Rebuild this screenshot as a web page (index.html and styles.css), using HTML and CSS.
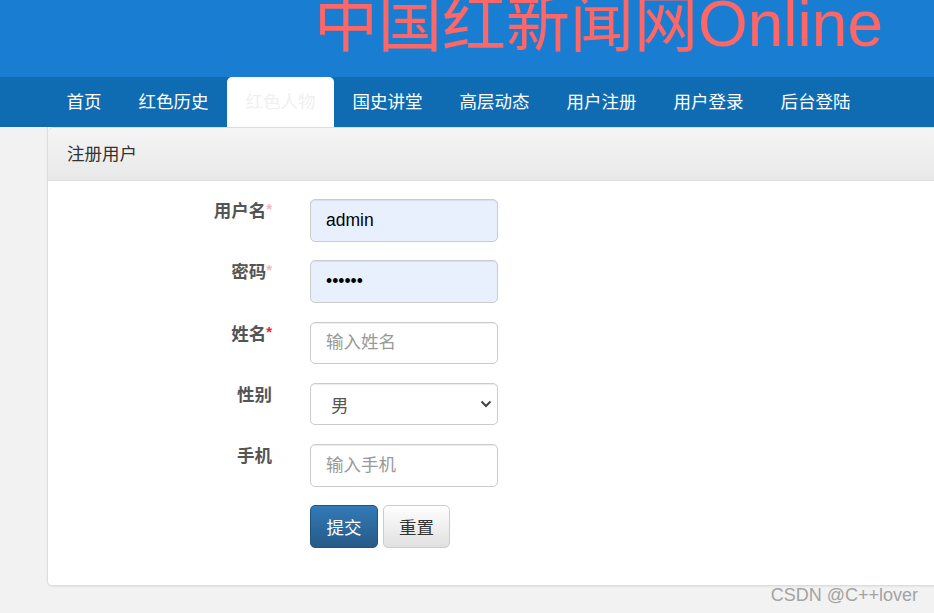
FILE: index.html
```html
<!DOCTYPE html>
<html lang="zh-CN">
<head>
    <meta charset="UTF-8"/>
    <meta content="width=device-width, initial-scale=1" name="viewport"/>
    <title>注册用户 - 中国红新闻网</title>
    <link rel="stylesheet" href="styles.css">
</head>
<body>

<div class="header">
    <h1 class="site-title">中国红新闻网Online</h1>
</div>

<div class="nav">
    <ul class="nav-list">
        <li><a href="#">首页</a></li>
        <li><a href="#">红色历史</a></li>
        <li class="active"><a href="#">红色人物</a></li>
        <li><a href="#">国史讲堂</a></li>
        <li><a href="#">高层动态</a></li>
        <li><a href="#">用户注册</a></li>
        <li><a href="#">用户登录</a></li>
        <li><a href="#">后台登陆</a></li>
    </ul>
</div>

<div class="main">
    <div class="panel">
        <div class="panel-heading">注册用户</div>
        <form class="panel-body" id="registerForm">
            <label class="form-label" for="username">用户名<span class="req soft">*</span></label>
            <input class="form-control filled" id="username" name="username" type="text" value="admin"/>

            <label class="form-label" for="password">密码<span class="req soft">*</span></label>
            <input class="form-control filled" id="password" name="password" type="password" value="123456"/>

            <label class="form-label" for="realname">姓名<span class="req">*</span></label>
            <input class="form-control" id="realname" name="realname" placeholder="输入姓名" type="text"/>

            <label class="form-label" for="sex">性别</label>
            <div class="select-wrap">
                <select class="form-control" id="sex" name="sex">
                    <option>男</option>
                    <option>女</option>
                </select>
                <svg class="select-arrow" width="12" height="8" viewBox="0 0 12 8">
                    <path d="M1.5 1.5 L6 6 L10.5 1.5" fill="none" stroke="#444" stroke-width="2"/>
                </svg>
            </div>

            <label class="form-label" for="phone">手机</label>
            <input class="form-control" id="phone" name="phone" placeholder="输入手机" type="tel"/>

            <div></div>
            <div class="btn-row">
                <button class="btn btn-primary" type="submit">提交</button>
                <button class="btn btn-default" type="reset">重置</button>
            </div>
        </form>
    </div>
</div>

<div class="watermark">CSDN @C++lover</div>

</body>
</html>
```

FILE: styles.css
```css
body {
  font-family: "Liberation Sans", "Noto Sans CJK SC", sans-serif;
  background: #f2f2f2;
  margin: 0;
  overflow: hidden;
  height: 100vh;
  position: relative;
}
.header {
  background: #197dd2;
  height: 77px;
  overflow: hidden;
}
.site-title {
  margin: -8px 0 0 0;
  padding-left: 314px;
  font-size: 64px;
  font-weight: normal;
  line-height: 1;
  color: #ff6666;
  white-space: nowrap;
}
.nav {
  background: #0f6cb2;
  height: 50px;
}
.nav-list {
  list-style: none;
  margin: 0;
  padding: 0 0 0 48px;
  display: flex;
  height: 100%;
}
.nav-list li a {
  display: block;
  height: 50px;
  line-height: 50px;
  padding: 0 18.5px;
  font-size: 17.5px;
  color: #fff;
  text-decoration: none;
}
.nav-list li.active a {
  background: #fff;
  color: #f0f0f0;
  border-radius: 5px 5px 0 0;
}
.main {
  padding-left: 47px;
}
.panel {
  width: 940px;
  background: #fff;
  border: 1px solid #ddd;
  border-top: none;
  border-radius: 0 0 5px 5px;
  box-shadow: 0 1px 2px rgba(0,0,0,0.06);
}
.panel-heading {
  height: 52px;
  line-height: 52px;
  padding-left: 19px;
  font-size: 17.5px;
  color: #333;
  background: linear-gradient(#f5f5f5, #e8e8e8);
  border-bottom: 1px solid #ddd;
  border-top: 1px solid #ddd;
  border-radius: 5px 5px 0 0;
}
.panel-body {
  display: grid;
  grid-template-columns: 224px 188px;
  column-gap: 38px;
  row-gap: 18.75px;
  padding: 18px 0 37.5px;
}
.form-label {
  text-align: right;
  font-size: 17.5px;
  font-weight: bold;
  color: #555;
  line-height: 25px;
}
.req {
  color: #ee2222;
  font-size: 15px;
  vertical-align: top;
  line-height: 20px;
}
.req.soft {
  color: #ffb0bd;
}
.form-control {
  width: 188px;
  height: 42.5px;
  box-sizing: border-box;
  padding: 0 15px;
  font-family: inherit;
  font-size: 17.5px;
  color: #555;
  background: #fff;
  border: 1px solid #ccc;
  border-radius: 5px;
  box-shadow: inset 0 1px 1px rgba(0,0,0,0.075);
  outline: none;
}
.form-control.filled {
  background: #e8f0fe;
  color: #000;
}
.form-control::placeholder {
  color: #999;
}
.select-wrap {
  position: relative;
  width: 188px;
}
select.form-control {
  appearance: none;
  padding-left: 20px;
  padding-top: 3px;
}
.select-arrow {
  position: absolute;
  right: 6px;
  top: 17px;
  pointer-events: none;
}
.btn-row {
  display: flex;
  gap: 5px;
}
.btn {
  height: 42.5px;
  padding: 0 15px;
  font-family: inherit;
  font-size: 17.5px;
  border-radius: 5px;
  cursor: pointer;
}
.btn-primary {
  width: 68px;
  color: #fff;
  background: linear-gradient(#337ab7, #265a88);
  border: 1px solid #245580;
}
.btn-default {
  width: 67px;
  color: #333;
  background: linear-gradient(#fff, #e0e0e0);
  border: 1px solid #ccc;
}
.watermark {
  position: absolute;
  right: 16px;
  bottom: 7px;
  font-size: 18px;
  color: #a3a3a3;
}
```
